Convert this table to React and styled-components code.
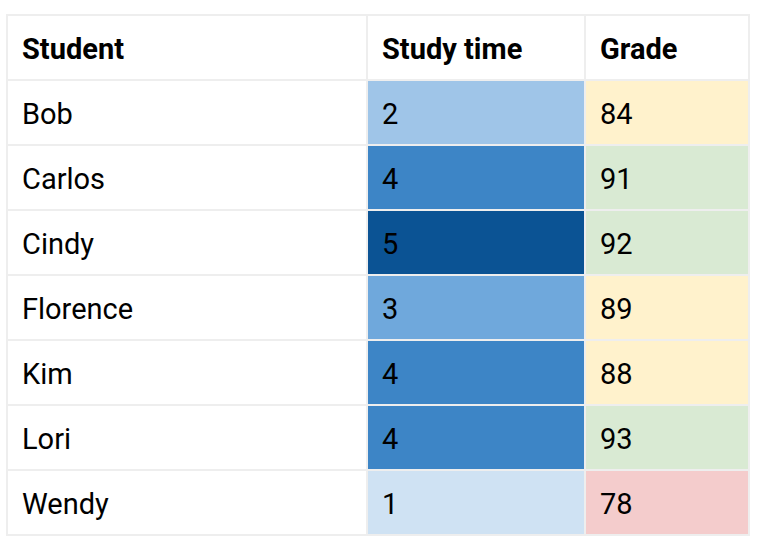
import React from 'react';
import styled, { createGlobalStyle } from 'styled-components';

const GlobalStyle = createGlobalStyle`
  html, body {
    margin: 0;
    padding: 0;
    background: #ffffff;
    font-family: Roboto, "Liberation Sans", Arial, sans-serif;
  }
`;

const Page = styled.div`
  padding: 14px 0 0 6px;
`;

const Table = styled.table`
  border-collapse: separate;
  border-spacing: 2px;
  background: #eeeeee;
  table-layout: fixed;
  width: 744px;
`;

const HeadCell = styled.th`
  height: 63px;
  padding: 3px 14px 0;
  background: #ffffff;
  color: #000000;
  font-size: 29px;
  font-weight: 700;
  text-align: left;
  vertical-align: middle;
  width: ${({ $w }) => $w}px;
  box-sizing: border-box;
`;

const Cell = styled.td`
  height: 63px;
  padding: 3px 14px 0;
  background: ${({ $bg }) => $bg || '#ffffff'};
  color: #000000;
  font-size: 29px;
  font-weight: 400;
  vertical-align: middle;
  box-sizing: border-box;
`;

const studyColors = {
  1: '#cfe2f3',
  2: '#9fc5e8',
  3: '#6fa8dc',
  4: '#3d85c6',
  5: '#0b5394',
};

const gradeColor = (g) => {
  if (g >= 90) return '#d9ead3';
  if (g >= 80) return '#fff2cc';
  return '#f4cccc';
};

const rows = [
  { name: 'Bob', time: 2, grade: 84 },
  { name: 'Carlos', time: 4, grade: 91 },
  { name: 'Cindy', time: 5, grade: 92 },
  { name: 'Florence', time: 3, grade: 89 },
  { name: 'Kim', time: 4, grade: 88 },
  { name: 'Lori', time: 4, grade: 93 },
  { name: 'Wendy', time: 1, grade: 78 },
];

export default function App() {
  return (
    <>
      <GlobalStyle />
      <Page>
        <Table>
          <thead>
            <tr>
              <HeadCell $w={358}>Student</HeadCell>
              <HeadCell $w={216}>Study time</HeadCell>
              <HeadCell $w={162}>Grade</HeadCell>
            </tr>
          </thead>
          <tbody>
            {rows.map((r) => (
              <tr key={r.name}>
                <Cell>{r.name}</Cell>
                <Cell $bg={studyColors[r.time]}>{r.time}</Cell>
                <Cell $bg={gradeColor(r.grade)}>{r.grade}</Cell>
              </tr>
            ))}
          </tbody>
        </Table>
      </Page>
    </>
  );
}
